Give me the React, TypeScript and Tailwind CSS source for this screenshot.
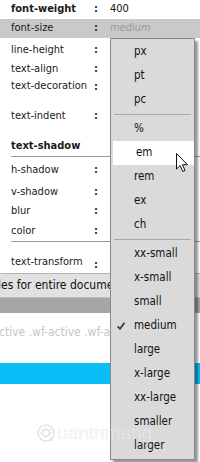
import React from "react";

const labelFont = { fontFamily: '"DejaVu Sans Condensed", "DejaVu Sans", sans-serif' };

type Row = { label: string; h: string; bold?: boolean; value?: React.ReactNode; colon?: boolean; bg?: string; colonEnd?: boolean; pt?: string };

function PropRow({ label, h, bold, value, colon = true, bg, colonEnd, pt }: Row) {
  return (
    <div className={`flex ${h} ${bg ?? ""} ${pt ?? ""} ${colonEnd ? "items-stretch" : "items-center"}`}>
      <div className={`w-[94px] pl-[11px] flex items-center whitespace-nowrap ${bold ? "font-bold" : ""}`}>{label}</div>
      <div className={`w-[16px] flex ${colonEnd ? "items-end pb-[1px]" : "items-center"} font-bold text-[#2a2a40]`}>{colon ? ":" : ""}</div>
      <div className="flex-1 flex items-center whitespace-nowrap">{value}</div>
    </div>
  );
}

const menuGroups: string[][] = [
  ["px", "pt", "pc"],
  ["%", "em", "rem", "ex", "ch"],
  ["xx-small", "x-small", "small", "medium", "large", "x-large", "xx-large", "smaller", "larger"],
];

export default function App() {
  return (
    <div className="relative w-[200px] h-[462px] overflow-hidden bg-white text-[11px] text-[#1a1a1a]" style={labelFont}>
      <div className="flex flex-col">
        <PropRow label="font-weight" h="h-[19px]" bold value={<span className="text-[#111]">400</span>} />
        <PropRow label="font-size" h="h-[19px]" bg="bg-[#c9c9c9]" value={<span className="italic text-[#9a9a9a]">medium</span>} />
        <PropRow label="line-height" h="h-[24px]" />
        <PropRow label="text-align" h="h-[14px]" />
        <PropRow label="text-decoration" h="h-[20px]" colonEnd />
        <PropRow label="text-indent" h="h-[40px]" />
        <PropRow label="text-shadow" h="h-[20px]" bold colon={false} />
        <div className="ml-[11px] h-px bg-[#9a9a9a]" />
        <PropRow label="h-shadow" h="h-[26px]" />
        <PropRow label="v-shadow" h="h-[18px]" />
        <PropRow label="blur" h="h-[21px]" />
        <PropRow label="color" h="h-[19px]" />
        <div className="ml-[11px] h-px bg-[#9a9a9a]" />
        <div className="flex h-[31px] pt-[10px]">
          <div className="w-[94px] pl-[11px] flex items-center whitespace-nowrap">text-transform</div>
          <div className="w-[16px] flex items-end font-bold text-[#2a2a40]">:</div>
        </div>
        <div className="h-[22px] bg-[#e1e1e1] border-t border-[#b5b5b5] flex items-center whitespace-nowrap text-[12px] text-[#111]">
          <span className="ml-[-2px]">les for entire document</span>
        </div>
        <div className="h-[2px] bg-[#e1e1e1]" />
        <div className="h-[16px] bg-[#a6a6a6] border-t border-[#bdbdbd]" />
        <div className="h-[50px] flex items-start pt-[10px] whitespace-nowrap text-[12px] text-[#c6c6c6]">
          <span className="ml-[-1px]">ctive .wf-active .wf-active .wf-active</span>
        </div>
        <div className="h-[21px] bg-[#0bbdf6]" />
        <div className="flex-1 bg-white" />
      </div>

      {/* dropdown menu */}
      <div
        className="absolute left-[110px] top-[38px] w-[85px] bg-[#dadada] border border-[#8a8a8a] shadow-[3px_3px_2px_rgba(0,0,0,0.4)] flex flex-col py-[1px] text-[11.5px] text-[#111]"
        style={{ fontFamily: '"DejaVu Sans Condensed", "DejaVu Sans", sans-serif' }}
      >
        {menuGroups.map((g, gi) => (
          <React.Fragment key={gi}>
            {gi > 0 && (
              <div className="h-[5px] flex items-center px-[3px]">
                <div className="h-px w-full bg-[#a9a9a9]" />
              </div>
            )}
            {g.map((it) => (
              <div
                key={it}
                className={`relative h-[24px] flex items-center pl-[23px] ${it === "em" ? "bg-white ml-[2px] pl-[21px]" : ""}`}
              >
                {it === "medium" && (
                  <svg className="absolute left-[6px] top-[8px]" width="8" height="8" viewBox="0 0 8 8">
                    <path d="M0.5 4.2 L3 6.8 L7.5 0.8" fill="none" stroke="#333" strokeWidth="1.6" />
                  </svg>
                )}
                {it}
              </div>
            ))}
          </React.Fragment>
        ))}
      </div>

      {/* watermark, lying over the page */}
      <div className="absolute left-[36px] top-[419px] flex items-center gap-[1px] text-white/60 pointer-events-none">
        <svg width="20" height="20" viewBox="0 0 20 20" fill="none" stroke="#e2e2e2" strokeWidth="1.5">
          <circle cx="10" cy="10" r="8" />
          <circle cx="10" cy="10" r="3.5" />
          <path d="M10 4v1.5M14.5 6l-1 1M16 10h-1.5M5.5 6l1 1M4 10h1.5M14 15l3 3" />
        </svg>
        <span className="text-[19px] [text-shadow:0_0_1px_rgba(0,0,0,0.12)]" style={{ fontFamily: '"Liberation Sans", sans-serif' }}>uantrimang</span>
      </div>

      {/* mouse cursor */}
      <svg className="absolute left-[176px] top-[153px]" width="13" height="20" viewBox="0 0 13 20">
        <path d="M0.5 0.5 L0.5 16 L4.2 12.5 L6.8 18.5 L9 17.5 L6.5 11.7 L11.5 11.7 Z" fill="white" stroke="#111" strokeWidth="1" strokeLinejoin="round" />
      </svg>
    </div>
  );
}
